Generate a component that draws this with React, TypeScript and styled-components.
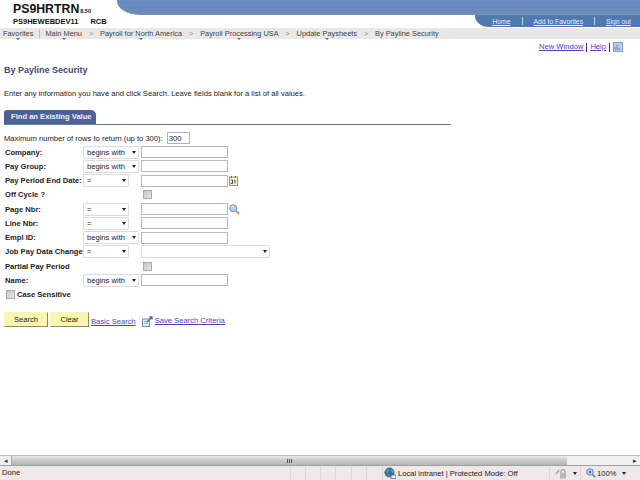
import { createGlobalStyle, styled } from 'styled-components';

const GlobalStyle = createGlobalStyle`
  html, body {
    margin: 0;
    padding: 0;
    background: #fff;
    overflow: hidden;
  }
  body {
    font-family: "Liberation Sans", Arial, sans-serif;
    color: #1a1a1a;
  }
`;

type FieldRow = {
  label: string;
  op?: string;
  opWide?: boolean;
  kind: 'text' | 'check' | 'select';
  icon?: 'calendar' | 'lookup';
};

const rows: FieldRow[] = [
  { label: 'Company:', op: 'begins with', opWide: true, kind: 'text' },
  { label: 'Pay Group:', op: 'begins with', opWide: true, kind: 'text' },
  { label: 'Pay Period End Date:', op: '=', kind: 'text', icon: 'calendar' },
  { label: 'Off Cycle ?', kind: 'check' },
  { label: 'Page Nbr:', op: '=', kind: 'text', icon: 'lookup' },
  { label: 'Line Nbr:', op: '=', kind: 'text' },
  { label: 'Empl ID:', op: 'begins with', opWide: true, kind: 'text' },
  { label: 'Job Pay Data Change:', op: '=', kind: 'select' },
  { label: 'Partial Pay Period', kind: 'check' },
  { label: 'Name:', op: 'begins with', opWide: true, kind: 'text' },
];

const crumbs = ['Main Menu', 'Payroll for North America', 'Payroll Processing USA', 'Update Paysheets'];
const emptyCells = [15, 15, 15, 16, 15, 16];

const CalendarIcon = () => (
  <svg width="9" height="10" viewBox="0 0 9 10">
    <rect x="0.5" y="1" width="8" height="8.500" fill="#fbf6d8" stroke="#a89448" />
    <path d="M2 4h1.500v3.500M1.800 7.500h1.700M5 4.500l1-.5v3.500" stroke="#333" fill="none" strokeWidth="0.900" />
    <path d="M2.500 0v2M6.500 0v2" stroke="#7a6a30" />
  </svg>
);

const LookupIcon = () => (
  <svg width="11" height="11" viewBox="0 0 11 11">
    <circle cx="4.200" cy="4.200" r="3.500" fill="#b4d4ee" stroke="#5f93bd" />
    <path d="M2.500 3.500a2 2 0 0 1 2-1.500" stroke="#fff" fill="none" />
    <path d="M6.800 6.800L10 10" stroke="#d09050" strokeWidth="1.800" />
  </svg>
);

const WindowIcon = () => (
  <svg width="10" height="10" viewBox="0 0 10 10">
    <rect x="0.500" y="0.500" width="9" height="9" fill="#b8cdea" stroke="#7f9fcb" />
    <path d="M2 8V5M4 8V3M6 8V6" stroke="#5f86bb" />
  </svg>
);

const SaveIcon = () => (
  <svg width="11" height="11" viewBox="0 0 11 11">
    <rect x="0.500" y="3" width="7" height="7.500" fill="#e4ecf4" stroke="#7890a8" />
    <path d="M2 5.500h4M2 7.500h4" stroke="#98a8b8" />
    <path d="M5 6L10 1M7.500 1H10V3.500" stroke="#3568b0" strokeWidth="1.300" fill="none" />
  </svg>
);

const GlobeIcon = () => (
  <svg width="12" height="12" viewBox="0 0 12 12">
    <circle cx="5.500" cy="5.500" r="5" fill="#2f6fb8" />
    <path d="M2 3.500c2-2 3-1 3 0S3 6 4.500 7 6 10 5 10.300M7 2c1 1 3 1 3 3S8 6 7.500 5 6.500 3 7 2z" fill="#5fae52" />
    <rect x="7" y="8" width="5" height="3.500" fill="#e8eef4" stroke="#4a5a70" strokeWidth="0.700" />
  </svg>
);

const LockIcon = () => (
  <svg width="12" height="11" viewBox="0 0 12 11">
    <path d="M1 6l3-4" stroke="#a8a8a8" strokeWidth="1.600" />
    <path d="M6 5V3.500a2 2 0 0 1 4 0V5" stroke="#888" fill="none" />
    <rect x="5" y="5" width="6" height="5.500" fill="#b8b8b8" />
  </svg>
);

const ZoomIcon = () => (
  <svg width="10" height="10" viewBox="0 0 10 10">
    <circle cx="4" cy="4" r="3.200" fill="#cfe2f4" stroke="#4f7fb0" />
    <path d="M2.500 4h3M4 2.500v3" stroke="#2a5a90" />
    <path d="M6.500 6.500L9.300 9.300" stroke="#4f7fb0" strokeWidth="1.500" />
  </svg>
);

export default function App() {
  return (
    <>
      <GlobalStyle />
      <Page>
        <Header>
          <Brand>
            <BrandTop>
              <BrandName>PS9HRTRN</BrandName>
              <BrandVersion>8.50</BrandVersion>
            </BrandTop>
            <BrandBottom>
              <span>PS9HEWEBDEV11</span>
              <span>RCB</span>
            </BrandBottom>
          </Brand>
          <HeaderRight>
            <Band />
            <UniversalNav>
              <UniversalLink href="#">Home</UniversalLink>
              <UniversalSep />
              <UniversalLink href="#">Add to Favorites</UniversalLink>
              <UniversalSep />
              <UniversalLink href="#">Sign out</UniversalLink>
            </UniversalNav>
          </HeaderRight>
        </Header>

        <NavBar>
          <NavItem $drop>Favorites</NavItem>
          <NavDivider />
          {crumbs.map((c) => (
            <Crumb key={c}>
              <NavItem $drop>{c}</NavItem>
              <Chevron>&gt;</Chevron>
            </Crumb>
          ))}
          <NavItem>By Payline Security</NavItem>
        </NavBar>

        <Main>
          <TopLinks>
            <TextLink href="#">New Window</TextLink>
            <PipeSep />
            <TextLink href="#">Help</TextLink>
            <PipeSep />
            <WindowIcon />
          </TopLinks>

          <Title>By Payline Security</Title>
          <Instructions>Enter any information you have and click Search. Leave fields blank for a list of all values.</Instructions>

          <TabStrip>
            <Tab>Find an Existing Value</Tab>
          </TabStrip>

          <MaxRows>
            <span>Maximum number of rows to return (up to 300):</span>
            <MaxInput defaultValue="300" />
          </MaxRows>

          <Fields>
            {rows.map((r) => (
              <Row key={r.label}>
                <Label>{r.label}</Label>
                {r.op ? (
                  <SelectWrap $wide={r.opWide}>
                    <NativeSelect defaultValue={r.op}>
                      <option>{r.op}</option>
                    </NativeSelect>
                  </SelectWrap>
                ) : (
                  <span />
                )}
                {r.kind === 'text' && (
                  <ValueCell>
                    <TextInput />
                    {r.icon === 'calendar' && <CalendarIcon />}
                    {r.icon === 'lookup' && <LookupIcon />}
                  </ValueCell>
                )}
                {r.kind === 'check' && (
                  <CheckCell>
                    <Check type="checkbox" />
                  </CheckCell>
                )}
                {r.kind === 'select' && (
                  <SelectWrap $full>
                    <NativeSelect />
                  </SelectWrap>
                )}
              </Row>
            ))}
          </Fields>

          <CaseRow>
            <Check type="checkbox" />
            <span>Case Sensitive</span>
          </CaseRow>

          <Actions>
            <ActionButton $w={44}>Search</ActionButton>
            <ActionButton $w={39}>Clear</ActionButton>
            <TextLink href="#">Basic Search</TextLink>
            <SaveWrap>
              <SaveIcon />
              <TextLink href="#">Save Search Criteria</TextLink>
            </SaveWrap>
          </Actions>
        </Main>

        <ScrollBar>
          <ScrollButton>◂</ScrollButton>
          <ScrollThumb>
            <Grip />
          </ScrollThumb>
          <ScrollTrack />
          <ScrollButton>▸</ScrollButton>
        </ScrollBar>

        <StatusBar>
          <StatusDone>Done</StatusDone>
          {emptyCells.map((w, i) => (
            <StatusCell key={i} $w={w} />
          ))}
          <StatusZone>
            <GlobeIcon />
            <span>Local intranet | Protected Mode: Off</span>
          </StatusZone>
          <StatusTool $w={31}>
            <LockIcon />
            <SmallArrow />
          </StatusTool>
          <StatusTool $w={60}>
            <ZoomIcon />
            <span>100%</span>
            <SmallArrow />
          </StatusTool>
        </StatusBar>
      </Page>
    </>
  );
}

const Page = styled.div`
  width: 640px;
  height: 480px;
  display: flex;
  flex-direction: column;
  overflow: hidden;
  background: #fff;
`;

const Header = styled.header`
  height: 28px;
  display: flex;
  flex: none;
`;

const Brand = styled.div`
  width: 117px;
  flex: none;
  padding: 2px 0 0 13px;
  box-sizing: border-box;
  color: #111;
  white-space: nowrap;
`;

const BrandTop = styled.div`
  display: flex;
  align-items: flex-end;
  height: 14px;
`;

const BrandName = styled.span`
  font-size: 12.300px;
  line-height: 14px;
  font-weight: 700;
`;

const BrandVersion = styled.span`
  font-size: 5.500px;
  font-weight: 700;
  line-height: 9px;
  margin-left: 1px;
`;

const BrandBottom = styled.div`
  display: flex;
  gap: 12px;
  font-size: 7.500px;
  font-weight: 700;
  line-height: 10px;
  margin-top: 1px;
`;

const HeaderRight = styled.div`
  flex: 1;
  display: flex;
  flex-direction: column;
  align-items: flex-end;
`;

const Band = styled.div`
  align-self: stretch;
  height: 15px;
  box-sizing: border-box;
  flex: none;
  border-bottom: 1px solid #8c8c98;
  border-bottom-left-radius: 24px 14px;
  background: repeating-linear-gradient(180deg, #6b8cc2 0 2px, #658abb 2px 4px);
`;

const UniversalNav = styled.nav`
  width: 165px;
  height: 12px;
  flex: none;
  box-sizing: border-box;
  display: flex;
  align-items: center;
  justify-content: flex-end;
  padding-right: 9px;
  background: #4f79b0;
  border-bottom-left-radius: 14px 11px;
`;

const UniversalLink = styled.a`
  color: #e8eef8;
  font-size: 6.800px;
  line-height: 11px;
`;

const UniversalSep = styled.span`
  width: 1px;
  height: 8px;
  background: #bcd0e8;
  margin: 0 11px;
`;

const NavBar = styled.nav`
  height: 11px;
  flex: none;
  display: flex;
  align-items: center;
  padding-left: 3px;
  background: #e8e8e8;
  font-size: 7.400px;
  color: #444;
  white-space: nowrap;
`;

const NavItem = styled.span<{ $drop?: boolean }>`
  position: relative;
  line-height: 11px;
  ${(p) =>
    p.$drop &&
    `
    &::after {
      content: '';
      position: absolute;
      left: 50%;
      bottom: -1px;
      margin-left: -2px;
      border: 2px solid transparent;
      border-top: 2px solid #3a6fb0;
      border-bottom: 0;
    }
  `}
`;

const NavDivider = styled.span`
  width: 1px;
  height: 9px;
  background: #bbb;
  margin: 0 5px 0 6px;
`;

const Crumb = styled.span`
  display: flex;
  align-items: center;
`;

const Chevron = styled.span`
  width: 18px;
  text-align: center;
  color: #888;
  font-size: 7px;
`;

const Main = styled.main`
  flex: 1;
  min-height: 0;
  padding: 0 0 0 4px;
`;

const TopLinks = styled.div`
  display: flex;
  justify-content: flex-end;
  align-items: center;
  height: 10px;
  margin-top: 3px;
  padding-right: 17px;
`;

const TextLink = styled.a`
  color: #4a3fc0;
  font-size: 7.600px;
  line-height: 10px;
  text-decoration: underline;
  white-space: nowrap;
`;

const PipeSep = styled.span`
  width: 1px;
  height: 9px;
  background: #4a2a70;
  margin: 0 3px;
`;

const Title = styled.h1`
  margin: 12px 0 0;
  font-size: 9px;
  line-height: 12px;
  font-weight: 700;
  color: #3b4a7a;
`;

const Instructions = styled.p`
  margin: 12px 0 0;
  font-size: 7.600px;
  line-height: 12px;
  color: #222;
  white-space: nowrap;
`;

const TabStrip = styled.div`
  margin-top: 10px;
  width: 447px;
  height: 15px;
  box-sizing: border-box;
  border-bottom: 1px solid #5f7f99;
  display: flex;
`;

const Tab = styled.div`
  width: 92px;
  height: 14px;
  box-sizing: border-box;
  padding-left: 7px;
  background: #4e6098;
  border-radius: 3px 5px 0 0;
  color: #f0f0f8;
  font-size: 7.600px;
  font-weight: 700;
  line-height: 14px;
  white-space: nowrap;
`;

const MaxRows = styled.div`
  display: flex;
  align-items: center;
  gap: 4px;
  height: 14px;
  margin-top: 6px;
  font-size: 7.600px;
  color: #222;
`;

const MaxInput = styled.input`
  width: 23px;
  height: 12px;
  box-sizing: border-box;
  border: 1px solid #b4b4b4;
  padding: 0 0 0 1px;
  font: 7.600px "Liberation Sans", Arial, sans-serif;
  color: #222;
  outline: none;
`;

const Fields = styled.div`
  display: grid;
  grid-auto-rows: 14.250px;
  margin-left: 1px;
`;

const Row = styled.div`
  display: grid;
  grid-template-columns: 78px 58px 1fr;
  align-items: center;
`;

const Label = styled.label`
  font-size: 7.600px;
  font-weight: 700;
  color: #222;
  white-space: nowrap;
`;

const SelectWrap = styled.span<{ $wide?: boolean; $full?: boolean }>`
  position: relative;
  display: block;
  width: ${(p) => (p.$full ? '129px' : p.$wide ? '56px' : '46px')};
  height: 13px;
  &::after {
    content: '';
    position: absolute;
    right: 3px;
    top: 5px;
    border: 2.500px solid transparent;
    border-top: 3px solid #222;
    border-bottom: 0;
    pointer-events: none;
  }
`;

const NativeSelect = styled.select`
  appearance: none;
  display: block;
  width: 100%;
  height: 100%;
  box-sizing: border-box;
  border: 1px solid #dcdcdc;
  border-radius: 1px;
  background: #fff;
  padding: 0 0 0 3px;
  font: 7.600px "Liberation Sans", Arial, sans-serif;
  color: #222;
  outline: none;
`;

const ValueCell = styled.span`
  display: flex;
  align-items: center;
  gap: 1px;
`;

const TextInput = styled.input`
  width: 87px;
  height: 12px;
  box-sizing: border-box;
  border: 1px solid #b8b8b8;
  padding: 0;
  background: #fff;
  outline: none;
`;

const CheckCell = styled.span`
  display: flex;
  align-items: center;
  padding-left: 2px;
`;

const Check = styled.input`
  appearance: none;
  width: 7px;
  height: 7px;
  margin: 0;
  border: 1px solid #a8a8a8;
  box-sizing: content-box;
  background: linear-gradient(135deg, #c4c4c4, #e8e8e8);
`;

const CaseRow = styled.div`
  display: flex;
  align-items: center;
  gap: 2px;
  height: 14px;
  margin: 0 0 0 2px;
  font-size: 7.600px;
  font-weight: 700;
  color: #222;
`;

const Actions = styled.div`
  display: flex;
  align-items: flex-end;
  margin-top: 10px;
  height: 15px;
`;

const ActionButton = styled.button<{ $w: number }>`
  width: ${(p) => p.$w}px;
  height: 15px;
  margin-right: 2px;
  padding: 0;
  box-sizing: border-box;
  border: 1px solid #f4f4c8;
  border-right-color: #8a8a70;
  border-bottom-color: #8a8a70;
  background: #f8f8ac;
  font: 7.600px "Liberation Sans", Arial, sans-serif;
  color: #222;
`;

const SaveWrap = styled.span`
  display: flex;
  align-items: center;
  gap: 2px;
  margin-left: 6px;
`;

const ScrollBar = styled.div`
  height: 11px;
  flex: none;
  display: flex;
  box-sizing: border-box;
  border-top: 1px solid #b8b8b8;
  border-bottom: 1px solid #a0a0a0;
  background: #f0f0f0;
`;

const ScrollButton = styled.span`
  width: 11px;
  flex: none;
  font-size: 7px;
  line-height: 9px;
  text-align: center;
  color: #333;
  background: #f0f0f0;
`;

const ScrollThumb = styled.div`
  width: 556px;
  flex: none;
  display: flex;
  align-items: center;
  justify-content: center;
  box-sizing: border-box;
  border-left: 1px solid #a8a8a8;
  background: linear-gradient(180deg, #e8e8e8, #c4c4c4 60%, #b4b4b4);
`;

const Grip = styled.span`
  width: 5px;
  height: 4px;
  background: repeating-linear-gradient(90deg, #555 0 1px, transparent 1px 2px);
`;

const ScrollTrack = styled.div`
  flex: 1;
  background: #f0f0f0;
`;

const StatusBar = styled.footer`
  height: 14px;
  flex: none;
  display: flex;
  align-items: stretch;
  background: #efe8e8;
  font-size: 7.600px;
  color: #222;
  white-space: nowrap;
`;

const StatusDone = styled.div`
  width: 290px;
  flex: none;
  padding-left: 2px;
  box-sizing: border-box;
  line-height: 14px;
`;

const StatusCell = styled.div<{ $w: number }>`
  width: ${(p) => p.$w}px;
  flex: none;
  box-sizing: border-box;
  border-left: 1px solid #dcd6d6;
`;

const StatusZone = styled.div`
  width: 167px;
  flex: none;
  box-sizing: border-box;
  border-left: 1px solid #dcd6d6;
  display: flex;
  align-items: center;
  gap: 2px;
  padding-left: 1px;
`;

const StatusTool = styled.div<{ $w: number }>`
  width: ${(p) => p.$w}px;
  flex: none;
  box-sizing: border-box;
  border-left: 1px solid #dcd6d6;
  display: flex;
  align-items: center;
  gap: 1px;
  padding-left: 5px;
`;

const SmallArrow = styled.span`
  margin-left: 5px;
  border: 2.500px solid transparent;
  border-top: 3px solid #222;
  border-bottom: 0;
`;
